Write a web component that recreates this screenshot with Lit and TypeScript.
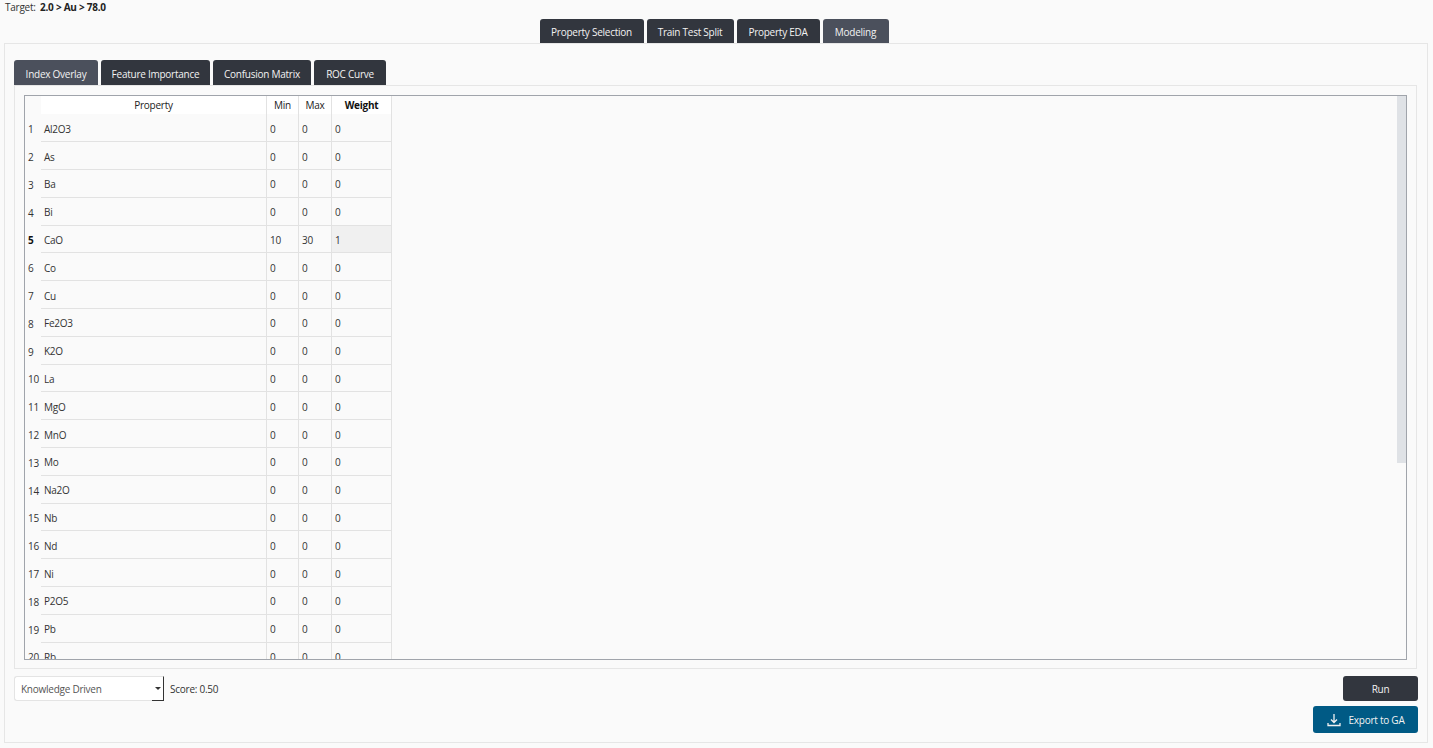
import { LitElement, html, css } from "lit";
import { customElement } from "lit/decorators.js";

const PROPS = [
  "Al2O3", "As", "Ba", "Bi", "CaO", "Co", "Cu", "Fe2O3", "K2O", "La",
  "MgO", "MnO", "Mo", "Na2O", "Nb", "Nd", "Ni", "P2O5", "Pb", "Rb"
];

@customElement("app-root")
export class AppRoot extends LitElement {
  static styles = css`
    :host {
      display: block;
      width: 1433px;
      height: 748px;
      overflow: hidden;
      background: #fafafa;
      color: #333;
      font-family: "Open Sans", "Noto Sans", sans-serif;
      font-size: 10px;
      letter-spacing: -0.25px;
    }

    .target {
      height: 19px;
      padding: 1px 0 0 5px;
      box-sizing: border-box;
      line-height: 13px;
    }

    .target b {
      margin-left: 2px;
      color: #222;
    }

    .main-tabs {
      display: flex;
      justify-content: center;
      gap: 3px;
      height: 24px;
      padding-right: 5px;
    }

    .tab {
      display: flex;
      align-items: center;
      justify-content: center;
      box-sizing: border-box;
      padding-top: 2px;
      background: #32363e;
      color: #f2f2f2;
      border-radius: 3px 3px 0 0;
    }

    .tab.active {
      background: #4b505c;
    }

    .outer {
      box-sizing: border-box;
      width: 1424px;
      height: 700px;
      margin-left: 4px;
      padding: 16px 10px 0 9px;
      border: 1px solid #e6e6e6;
    }

    .inner-tabs {
      display: flex;
      gap: 3px;
      height: 25px;
    }

    .inner-tabs .tab {
      padding-top: 3px;
    }

    .panel {
      box-sizing: border-box;
      height: 584px;
      padding: 9px;
      border: 1px solid #e6e6e6;
    }

    .table-box {
      display: flex;
      height: 565px;
      box-sizing: border-box;
      border: 1px solid #a0a4ab;
      overflow: hidden;
    }

    .table {
      flex: 1;
      height: 100%;
      overflow: hidden;
    }

    .row {
      display: grid;
      grid-template-columns: 16px 226px 32px 33px 60px;
      width: 367px;
      height: 27.8px;
    }

    .row.head {
      height: 18.4px;
      color: #222;
    }

    .cell {
      display: flex;
      align-items: center;
      box-sizing: border-box;
      padding: 2px 0 0 3px;
      border-right: 1px solid #e2e2e2;
      border-bottom: 1px solid #e2e2e2;
    }

    .row .num {
      padding-left: 3px;
      border: none;
      white-space: nowrap;
    }

    .row.sel .num {
      font-weight: 700;
      color: #111;
    }

    .row.sel .wt {
      background: #f0f0f0;
    }

    .head .cell {
      justify-content: center;
      padding: 0;
      background: #fff;
      border-bottom: none;
    }

    .head .num {
      background: #fafafa;
    }

    .head .wt {
      font-weight: 700;
      color: #111;
    }

    .scroll {
      flex: none;
      width: 9px;
      height: 367px;
      background: #dfe2e6;
    }

    .foot {
      display: flex;
      align-items: flex-start;
      justify-content: space-between;
      padding-top: 7px;
    }

    .left {
      display: flex;
      align-items: center;
      gap: 6px;
    }

    .combo {
      display: flex;
      align-items: center;
      justify-content: space-between;
      box-sizing: border-box;
      width: 150px;
      height: 25px;
      padding: 0 2px 0 6px;
      background: #fff;
      border: 1px solid #e4e4e4;
      border-right: 1px solid #333;
      border-radius: 3px 0 0 3px;
      color: #555;
      position: relative;
    }

    .combo::after {
      content: "";
      position: absolute;
      right: -1px;
      bottom: -1px;
      width: 12px;
      height: 1px;
      background: #333;
    }

    .arrow {
      width: 0;
      height: 0;
      border-left: 3px solid transparent;
      border-right: 3px solid transparent;
      border-top: 3px solid #333;
    }

    .right {
      display: flex;
      flex-direction: column;
      align-items: flex-end;
      gap: 5px;
      margin-right: -1px;
    }

    .btn {
      display: flex;
      align-items: center;
      justify-content: center;
      box-sizing: border-box;
      border-radius: 3px;
      color: #f2f2f2;
    }

    .run {
      width: 75px;
      height: 25px;
      background: #32363e;
    }

    .export {
      gap: 8px;
      width: 105px;
      height: 27px;
      background: #005a85;
    }
  `;

  private renderRow(name: string, i: number) {
    const sel = name === "CaO";
    return html`
      <div class="row ${sel ? "sel" : ""}">
        <div class="cell num">${i + 1}</div>
        <div class="cell">${name}</div>
        <div class="cell">${sel ? 10 : 0}</div>
        <div class="cell">${sel ? 30 : 0}</div>
        <div class="cell wt">${sel ? 1 : 0}</div>
      </div>
    `;
  }

  render() {
    return html`
      <div class="target">Target: <b>2.0 &gt; Au &gt; 78.0</b></div>
      <div class="main-tabs">
        <div class="tab" style="width:104px">Property Selection</div>
        <div class="tab" style="width:87px">Train Test Split</div>
        <div class="tab" style="width:83px">Property EDA</div>
        <div class="tab active" style="width:66px">Modeling</div>
      </div>
      <div class="outer">
        <div class="inner-tabs">
          <div class="tab active" style="width:84px">Index Overlay</div>
          <div class="tab" style="width:109px">Feature Importance</div>
          <div class="tab" style="width:98px">Confusion Matrix</div>
          <div class="tab" style="width:72px">ROC Curve</div>
        </div>
        <div class="panel">
          <div class="table-box">
            <div class="table">
              <div class="row head">
                <div class="cell num"></div>
                <div class="cell">Property</div>
                <div class="cell">Min</div>
                <div class="cell">Max</div>
                <div class="cell wt">Weight</div>
              </div>
              ${PROPS.map((p, i) => this.renderRow(p, i))}
            </div>
            <div class="scroll"></div>
          </div>
        </div>
        <div class="foot">
          <div class="left">
            <div class="combo">Knowledge Driven<span class="arrow"></span></div>
            <span>Score: 0.50</span>
          </div>
          <div class="right">
            <div class="btn run">Run</div>
            <div class="btn export">
              <svg width="14" height="14" viewBox="0 0 14 14" fill="none" stroke="#f2f2f2" stroke-width="1.3">
                <path d="M7 1v8.5M4 6.5 7 9.5l3-3" />
                <path d="M1 10v2.5h12V10" />
              </svg>
              Export to GA
            </div>
          </div>
        </div>
      </div>
    `;
  }
}
